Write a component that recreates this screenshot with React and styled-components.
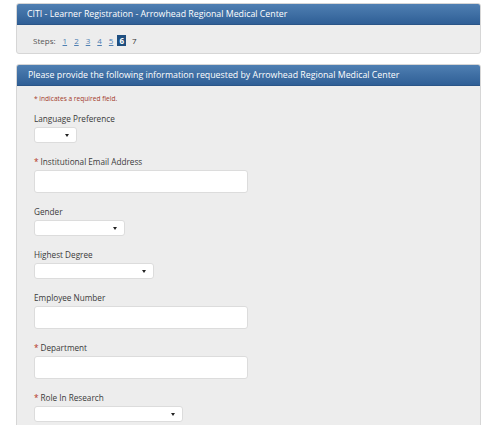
import React from 'react'
import styled, { createGlobalStyle } from 'styled-components'

const Global = createGlobalStyle`
  body {
    margin: 0;
    background: #ffffff;
    font-family: "Open Sans", "Liberation Sans", sans-serif;
  }
`;

const Page = styled.div`
  width: 465px;
  padding: 3px 0 0 16px;
`;

const Panel = styled.div`
  background: #ededed;
  border: 1px solid #d6d6d6;
  border-radius: 3px;
  margin-bottom: 10px;
  overflow: hidden;
`;

const Heading = styled.div`
  height: 20px;
  line-height: 20px;
  padding-left: ${p => p.$indent || 10}px;
  color: #ffffff;
  font-size: 8.8px;
  background: linear-gradient(#4f7fb2, #2f5f96);
  border-bottom: 1px solid #2a5587;
  white-space: nowrap;
`;

const StepsBar = styled.div`
  height: 28px;
  box-sizing: border-box;
  display: flex;
  align-items: center;
  padding: 2px 0 0 16px;
  font-size: 8px;
  color: #555;
`;

const StepLink = styled.span`
  color: #4f7fb2;
  text-decoration: underline;
  margin-left: 7px;
`;

const StepCurrent = styled.span`
  background: #1f4f80;
  color: #fff;
  font-weight: bold;
  padding: 1px 2px;
  margin-left: 4px;
  line-height: 9px;
`;

const StepPlain = styled.span`
  margin-left: 6px;
  color: #333;
`;

const Body = styled.div`
  padding: 8px 0 4px 17px;
  height: 330px;
`;

const Note = styled.div`
  font-size: 6.6px;
  color: #a33a2a;
  line-height: 10px;
  margin-bottom: 9px;
`;

const Field = styled.div`
  margin-bottom: 13px;
`;

const Label = styled.div`
  font-size: 8.2px;
  color: #3a3a3a;
  line-height: 12px;
  margin-bottom: 2px;
`;

const Star = styled.span`
  color: #b3311c;
  margin-right: 2px;
`;

const Select = styled.div`
  position: relative;
  width: ${p => p.$w}px;
  height: 16px;
  box-sizing: border-box;
  background: #fff;
  border: 1px solid #dcdcdc;
  border-radius: 3px;
  &::after {
    content: '';
    position: absolute;
    right: 7px;
    top: 6px;
    border-left: 2px solid transparent;
    border-right: 2px solid transparent;
    border-top: 3px solid #222;
  }
`;

const Input = styled.div`
  width: 214px;
  height: 23px;
  box-sizing: border-box;
  background: #fff;
  border: 1px solid #dcdcdc;
  border-radius: 3px;
`;

const fields = [
  { label: 'Language Preference', type: 'select', w: 43 },
  { label: 'Institutional Email Address', req: true },
  { label: 'Gender', type: 'select', w: 91 },
  { label: 'Highest Degree', type: 'select', w: 120 },
  { label: 'Employee Number' },
  { label: 'Department', req: true },
  { label: 'Role In Research', req: true, type: 'select', w: 149 },
];

export default function App() {
  return (
    <Page>
      <Global />
      <Panel>
        <Heading>CITI - Learner Registration - Arrowhead Regional Medical Center</Heading>
        <StepsBar>
          Steps:
          {[1, 2, 3, 4, 5].map(n => <StepLink key={n}>{n}</StepLink>)}
          <StepCurrent>6</StepCurrent>
          <StepPlain>7</StepPlain>
        </StepsBar>
      </Panel>
      <Panel>
        <Heading $indent={11}>Please provide the following information requested by Arrowhead Regional Medical Center</Heading>
        <Body>
          <Note>* indicates a required field.</Note>
          {fields.map(f => (
            <Field key={f.label}>
              <Label>{f.req && <Star>*</Star>}{f.label}</Label>
              {f.type === 'select' ? <Select $w={f.w} /> : <Input />}
            </Field>
          ))}
        </Body>
      </Panel>
    </Page>
  )
}
